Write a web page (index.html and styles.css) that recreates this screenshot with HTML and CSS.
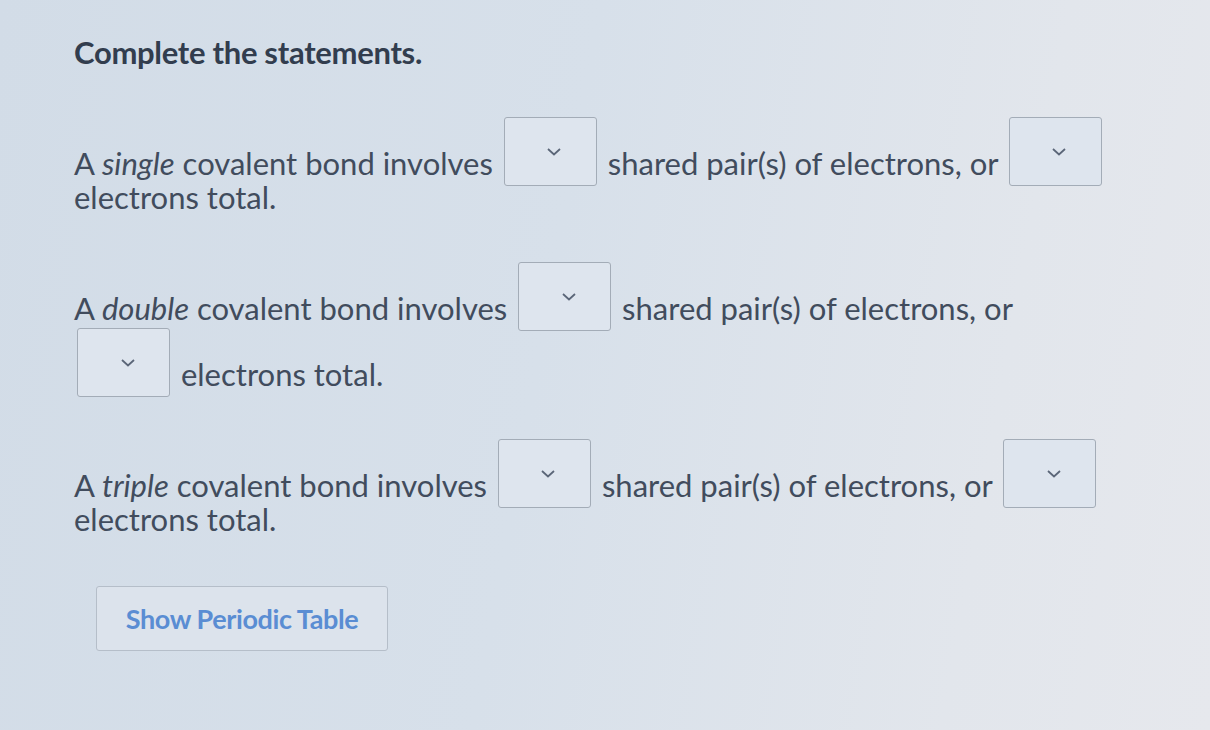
FILE: index.html
```html
<!DOCTYPE html>
<html lang="en">
<head>
    <meta charset="UTF-8">
    <title>Complete the statements</title>
    <link rel="stylesheet" href="styles.css">
</head>
<body>
    <div class="question">
        <h2 class="prompt">Complete the statements.</h2>

        <p class="statement">
            A <em>single</em> covalent bond involves
            <span class="select"><svg class="chevron" viewBox="0 0 14 8"><path d="M1 1 L7 6.5 L13 1"/></svg></span>
            shared pair(s) of electrons, or
            <span class="select"><svg class="chevron" viewBox="0 0 14 8"><path d="M1 1 L7 6.5 L13 1"/></svg></span>
            electrons total.
        </p>

        <p class="statement">
            A <em>double</em> covalent bond involves
            <span class="select"><svg class="chevron" viewBox="0 0 14 8"><path d="M1 1 L7 6.5 L13 1"/></svg></span>
            shared pair(s) of electrons, or
            <span class="select"><svg class="chevron" viewBox="0 0 14 8"><path d="M1 1 L7 6.5 L13 1"/></svg></span>
            electrons total.
        </p>

        <p class="statement">
            A <em>triple</em> covalent bond involves
            <span class="select"><svg class="chevron" viewBox="0 0 14 8"><path d="M1 1 L7 6.5 L13 1"/></svg></span>
            shared pair(s) of electrons, or
            <span class="select"><svg class="chevron" viewBox="0 0 14 8"><path d="M1 1 L7 6.5 L13 1"/></svg></span>
            electrons total.
        </p>

        <button class="periodic-button">Show Periodic Table</button>
    </div>
</body>
</html>
```

FILE: styles.css
```css
html, body {
    height: 100%;
}

body {
    margin: 0;
    font-family: 'Lato', 'Noto Sans', sans-serif;
    color: #414c5d;
    background: linear-gradient(100deg, #d2dce7 0%, #d7e0ea 45%, #e2e6ec 80%, #e6e8ed 100%);
    overflow: hidden;
}

.question {
    width: 1037px;
    padding: 33px 0 0 74px;
}

.prompt {
    margin: 0 0 43px 0;
    font-size: 31px;
    font-weight: 700;
    color: #323d4e;
    letter-spacing: -0.3px;
}

.statement {
    margin: 0 0 45px 0;
    font-size: 31px;
    line-height: 34px;
}

.statement em {
    font-style: italic;
}

/* dropdown placeholder box */
.select {
    display: inline-block;
    overflow: hidden;
    width: 93px;
    height: 69px;
    margin: 3px 3px -11px 3px;
    border: 1px solid #a3acb7;
    border-radius: 3px;
    background-color: #dee5ee;
    vertical-align: baseline;
    text-align: center;
    box-sizing: border-box;
}

.chevron {
    display: block;
    width: 14px;
    height: 8px;
    margin: 30px auto 0 auto;
    position: relative;
    left: 4px;
    fill: none;
    stroke: #5b6678;
    stroke-width: 1.8;
}

.periodic-button {
    margin: 5px 0 0 22px;
    width: 292px;
    height: 65px;
    border: 1px solid #b5bec9;
    border-radius: 3px;
    background-color: #dce3ec;
    font-family: 'Lato', 'Noto Sans', sans-serif;
    font-size: 27px;
    font-weight: 700;
    color: #5a8dd3;
    letter-spacing: -0.4px;
    cursor: pointer;
}
```
